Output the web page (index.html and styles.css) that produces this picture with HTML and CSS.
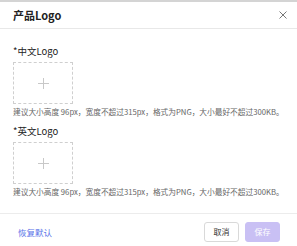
FILE: index.html
```html
<!DOCTYPE html>
<html>
<head>
<meta charset="utf-8">
<link rel="stylesheet" href="styles.css">
</head>
<body>
<div class="topband"></div>
<div class="modal">
  <div class="header">
    <span class="title">产品Logo</span>
    <svg class="close" width="8" height="8" viewBox="0 0 8 8"><path d="M0.5 0.5L7.5 7.5M7.5 0.5L0.5 7.5" stroke="#777" stroke-width="1"/></svg>
  </div>
  <div class="body">
    <div class="field">
      <div class="label">*中文Logo</div>
      <div class="upload"><span class="plus"></span></div>
      <div class="hint">建议大小高度 96px，宽度不超过315px，格式为PNG，大小最好不超过300KB。</div>
    </div>
    <div class="field">
      <div class="label">*英文Logo</div>
      <div class="upload"><span class="plus"></span></div>
      <div class="hint">建议大小高度 96px，宽度不超过315px，格式为PNG，大小最好不超过300KB。</div>
    </div>
  </div>
  <div class="footer">
    <span class="reset">恢复默认</span>
    <div class="btns">
      <button class="btn cancel">取消</button>
      <button class="btn save">保存</button>
    </div>
  </div>
</div>
</body>
</html>
```
FILE: styles.css
```css
html, body { margin: 0; padding: 0; }
body {
  width: 297px; height: 246px; overflow: hidden; background: #fff;
  font-family: "Noto Sans CJK SC", "Liberation Sans", sans-serif;
  color: #222;
}
.topband { height: 2px; background: #d4d4d4; }
.modal { display: flex; flex-direction: column; height: 244px; }
.header {
  height: 26px; display: flex; align-items: center; justify-content: space-between;
  padding: 0 10px 0 13px; border-bottom: 1px solid #e8e8e8;
}
.title { font-size: 11px; font-weight: bold; color: #222; }
.close { display: block; }
.body { flex: 1; padding: 16px 13px 0; display: flex; flex-direction: column; gap: 8px; }
.label { font-size: 9.5px; line-height: 12px; color: #222; }
.upload {
  margin-top: 5px; width: 58px; height: 40px; border: 1px dashed #cfcfcf;
  display: flex; align-items: center; justify-content: center; position: relative;
}
.plus { position: relative; width: 11px; height: 11px; }
.plus::before, .plus::after { content: ""; position: absolute; background: #c8c8c8; }
.plus::before { left: 5px; top: 0; width: 1px; height: 11px; }
.plus::after { top: 5px; left: 0; height: 1px; width: 11px; }
.hint { margin-top: 3px; font-size: 7.7px; line-height: 10px; color: #666; white-space: nowrap; }
.footer {
  box-sizing: border-box; height: 33px; border-top: 1px solid #ececec; display: flex; align-items: center;
  justify-content: space-between; padding: 3px 17px 0 18px;
}
.reset { font-size: 8.5px; color: #5a73e8; }
.btns { display: flex; gap: 6px; }
.btn {
  width: 35px; height: 20px; font-family: inherit; font-size: 8px; border-radius: 3px;
  padding: 0; display: flex; align-items: center; justify-content: center;
}
.cancel { background: #fff; border: 1px solid #d9d9d9; color: #333; }
.save { background: #c9c0f4; border: 1px solid #c9c0f4; color: #fff; }
```
